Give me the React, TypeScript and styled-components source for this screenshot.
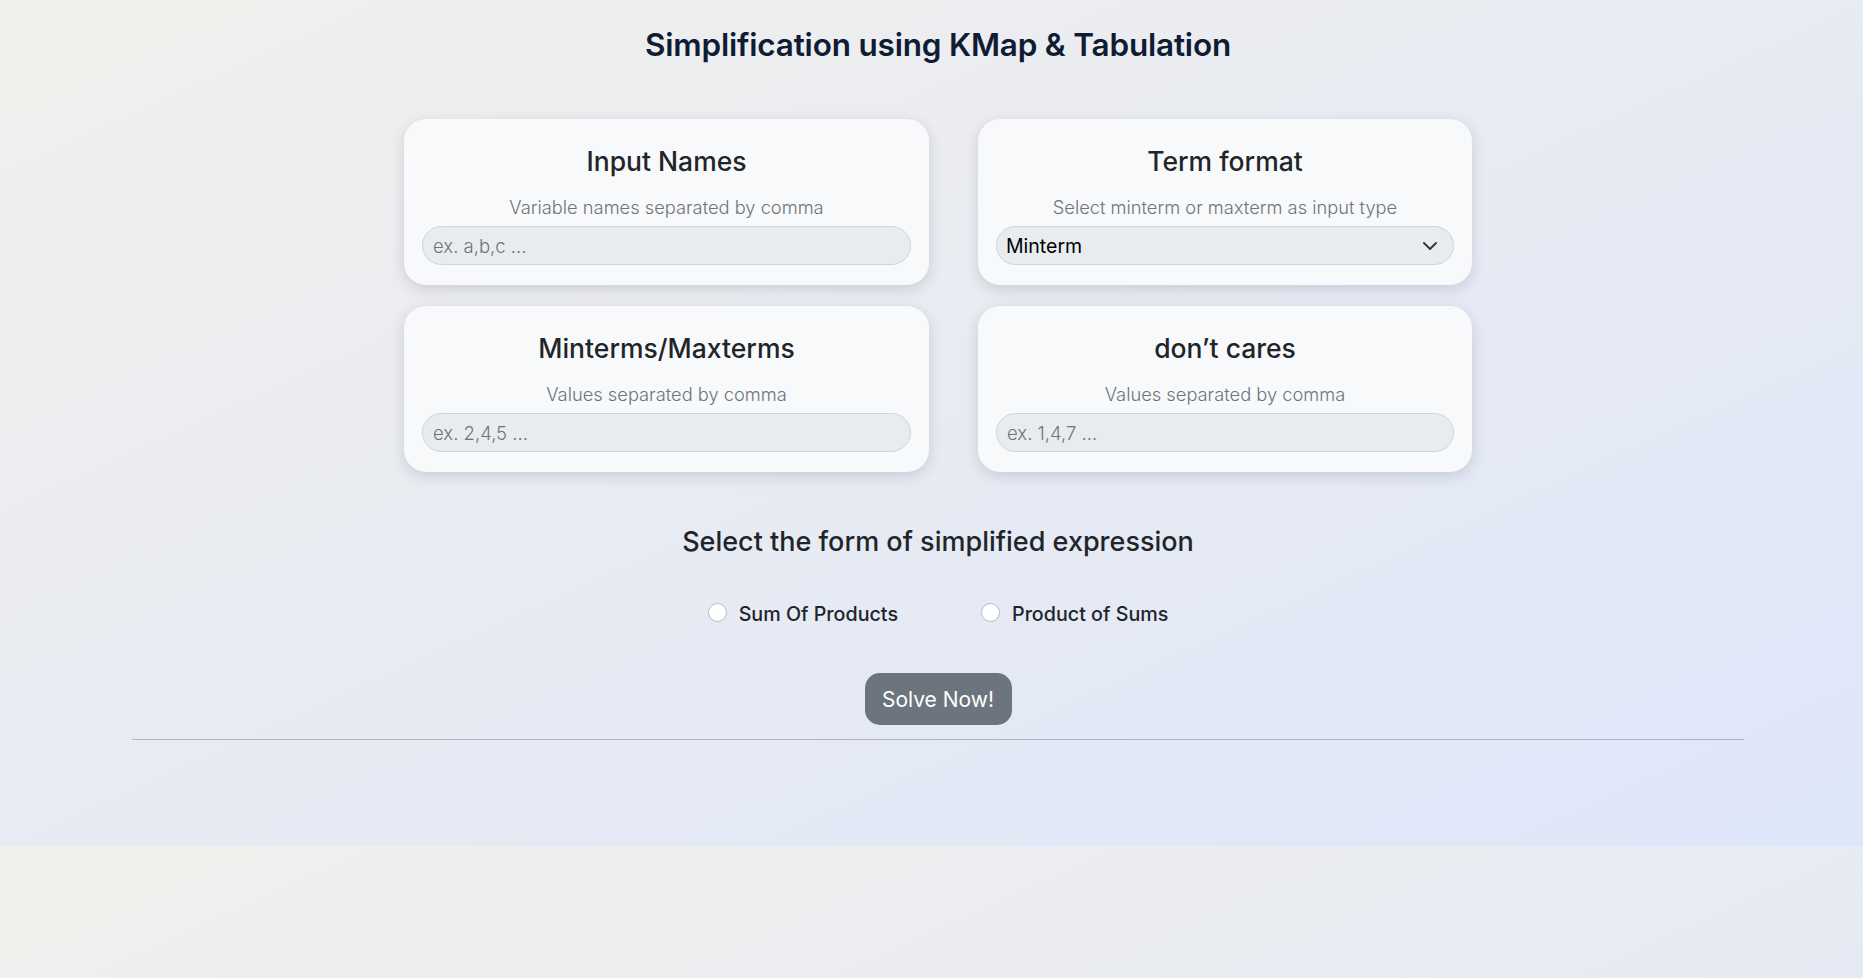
import React, { useState } from "react";
import styled, { createGlobalStyle } from "styled-components";

const GlobalStyle = createGlobalStyle`
  html, body {
    margin: 0;
    padding: 0;
  }
  body {
    font-family: Inter, "Noto Sans", sans-serif;
    background: linear-gradient(to bottom right, #f1f0ec, #dee6fa);
    color: #212529;
  }
`;

const Page = styled.div`
  display: flex;
  flex-direction: column;
  align-items: center;
  margin: 0 119px 0 132px;
  padding: 25px 0 106px;
`;

const Title = styled.h1`
  margin: 0;
  font-size: 31.5px;
  line-height: 40px;
  font-weight: 600;
  color: #0f1c33;
  letter-spacing: -0.2px;
`;

const CardGrid = styled.div`
  display: grid;
  grid-template-columns: 525px 494px;
  column-gap: 49px;
  row-gap: 21px;
  margin-top: 54px;
`;

const Card = styled.div`
  display: flex;
  flex-direction: column;
  align-items: center;
  background: #f8f9fa;
  border-radius: 22px;
  box-shadow: 0 4px 14px rgba(40, 44, 60, 0.16);
  padding: 25px 18px 20px;
`;

const CardTitle = styled.h3`
  margin: 0;
  font-size: 26.5px;
  line-height: 34px;
  font-weight: 500;
  color: #212529;
`;

const Hint = styled.p`
  margin: 16px 0 5px;
  font-size: 18.3px;
  line-height: 27px;
  font-weight: 300;
  color: #6c757d;
`;

const Field = styled.input`
  box-sizing: border-box;
  width: 100%;
  height: 39px;
  padding: 0 10px;
  border: 1px solid #ced4da;
  border-radius: 20px;
  background: #e9ecef;
  font-family: inherit;
  font-size: 18.5px;
  color: #212529;
  outline: none;

  &::placeholder {
    color: #6c757d;
    font-weight: 300;
  }
`;

const SelectWrap = styled.div`
  position: relative;
  width: 100%;
`;

const Select = styled.select`
  box-sizing: border-box;
  width: 100%;
  height: 39px;
  padding: 0 36px 0 9px;
  border: 1px solid #ced4da;
  border-radius: 20px;
  background: #e9ecef;
  font-family: inherit;
  font-size: 19.5px;
  color: #000;
  appearance: none;
  outline: none;
`;

const Chevron = styled.svg`
  position: absolute;
  right: 16px;
  top: 12px;
  pointer-events: none;
`;

const Subheading = styled.h2`
  margin: 54px 0 0;
  font-size: 27px;
  line-height: 32px;
  font-weight: 500;
  color: #212529;
`;

const RadioRow = styled.div`
  display: flex;
  gap: 83px;
  margin-top: 41px;
`;

const RadioLabel = styled.label`
  display: flex;
  align-items: center;
  gap: 12px;
  font-size: 19.7px;
  line-height: 30px;
  font-weight: 500;
  color: #212529;
  cursor: pointer;
`;

const Radio = styled.input.attrs({ type: "radio" })`
  appearance: none;
  margin: 0;
  width: 19px;
  height: 19px;
  border-radius: 50%;
  border: 1px solid #b9bcc2;
  background: #fff;
  position: relative;
  top: -2px;

  &:checked {
    border: 5px solid #0d6efd;
  }
`;

const SolveButton = styled.button`
  margin-top: 44px;
  width: 147px;
  height: 52px;
  border: none;
  border-radius: 15px;
  background: #6c757d;
  color: #fff;
  font-family: inherit;
  font-size: 21px;
  font-weight: 400;
  cursor: pointer;
`;

const Divider = styled.hr`
  align-self: stretch;
  margin: 14px 0 0;
  border: none;
  border-top: 1px solid #b3b6be;
`;

const App: React.FC = () => {
  const [form, setForm] = useState("");

  return (
    <>
      <GlobalStyle />
      <Page>
        <Title>Simplification using KMap &amp; Tabulation</Title>
        <CardGrid>
          <Card>
            <CardTitle>Input Names</CardTitle>
            <Hint>Variable names separated by comma</Hint>
            <Field placeholder="ex. a,b,c ..." />
          </Card>
          <Card>
            <CardTitle>Term format</CardTitle>
            <Hint>Select minterm or maxterm as input type</Hint>
            <SelectWrap>
              <Select defaultValue="min">
                <option value="min">Minterm</option>
                <option value="max">Maxterm</option>
              </Select>
              <Chevron width="16" height="16" viewBox="0 0 16 16" fill="none">
                <path d="M2 5l6 6 6-6" stroke="#343a40" strokeWidth="2" strokeLinecap="round" strokeLinejoin="round" />
              </Chevron>
            </SelectWrap>
          </Card>
          <Card>
            <CardTitle>Minterms/Maxterms</CardTitle>
            <Hint>Values separated by comma</Hint>
            <Field placeholder="ex. 2,4,5 ..." />
          </Card>
          <Card>
            <CardTitle>don’t cares</CardTitle>
            <Hint>Values separated by comma</Hint>
            <Field placeholder="ex. 1,4,7 ..." />
          </Card>
        </CardGrid>

        <Subheading>Select the form of simplified expression</Subheading>
        <RadioRow>
          <RadioLabel>
            <Radio name="form" checked={form === "sop"} onChange={() => setForm("sop")} />
            Sum Of Products
          </RadioLabel>
          <RadioLabel>
            <Radio name="form" checked={form === "pos"} onChange={() => setForm("pos")} />
            Product of Sums
          </RadioLabel>
        </RadioRow>

        <SolveButton>Solve Now!</SolveButton>
        <Divider />
      </Page>
    </>
  );
};

export default App;
